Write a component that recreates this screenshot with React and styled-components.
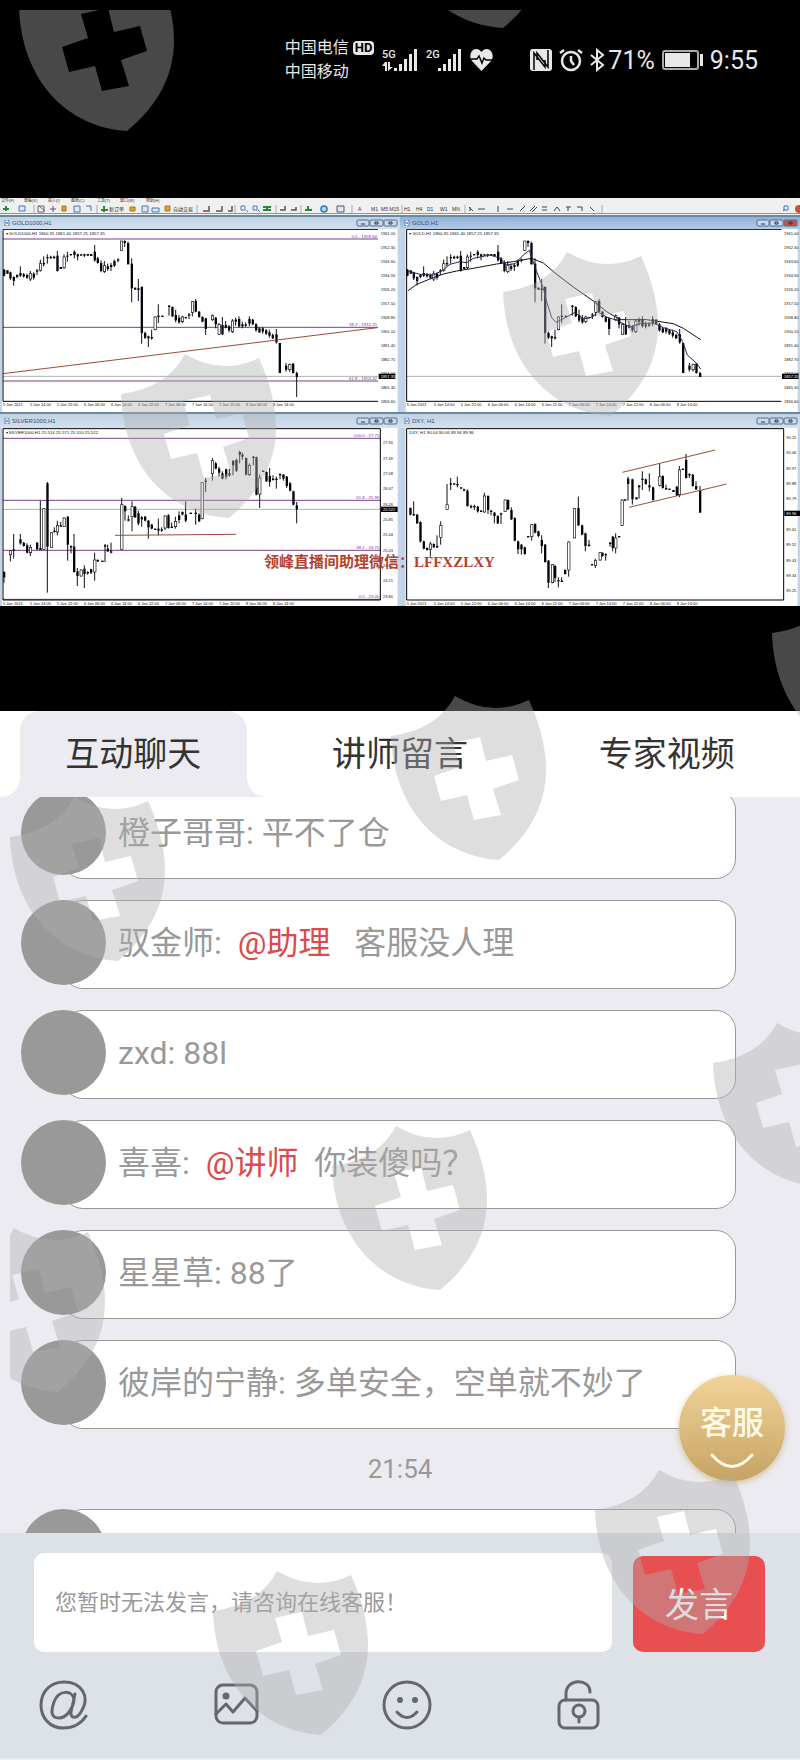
import React, { Component } from 'react';
import styled, { createGlobalStyle } from 'styled-components';

// Each bar: [x, high, low, bodyTop, bodyBottom, isHollow]
const GOLD_BARS = [
  [12, 222, 244, 224, 242], [22, 226, 236], [31, 230, 255, 232, 250], [41, 244, 272, 246, 258],
  [51, 238, 250, 240, 246], [61, 214, 246, 234, 242], [71, 234, 248, 238, 244], [81, 236, 252, 240, 248],
  [91, 228, 258, 236, 252, 1], [101, 232, 254, 236, 248], [111, 222, 240, 226, 230], [121, 194, 230, 206, 226, 1],
  [131, 184, 214, 204, 208], [142, 178, 206, 186, 190], [152, 182, 192, 185, 190], [162, 182, 192, 185, 189],
  [172, 168, 230, 182, 228], [182, 216, 222], [192, 178, 222, 186, 218, 1], [202, 170, 200, 182, 185],
  [212, 177, 181], [223, 166, 190, 170, 180], [233, 176, 196, 178, 184], [243, 178, 182], [253, 176, 186, 178, 182],
  [263, 177, 182], [273, 177, 183], [284, 150, 200, 170, 196], [293, 186, 206, 190, 204], [303, 196, 232, 204, 228],
  [313, 198, 234, 212, 230, 1], [323, 206, 228, 214, 222], [333, 204, 228, 210, 216], [343, 194, 216, 198, 212],
  [354, 190, 202, 193, 197], [364, 138, 168, 138, 166, 1], [374, 136, 156, 138, 144], [384, 140, 208, 144, 208],
  [395, 190, 322, 206, 280], [405, 278, 284], [415, 252, 318, 280, 285], [425, 274, 446, 276, 414],
  [435, 410, 432, 414, 428], [445, 422, 456, 424, 430], [455, 404, 434, 426, 430], [465, 364, 406, 366, 404, 1],
  [475, 328, 384, 362, 366], [487, 362, 366], [507, 330, 362, 332, 336], [517, 334, 366, 336, 364],
  [527, 344, 382, 360, 376], [537, 360, 386, 368, 382], [547, 362, 384, 366, 380, 1], [557, 366, 370],
  [567, 354, 372, 358, 362], [577, 318, 364, 320, 352, 1], [587, 312, 352, 318, 350], [597, 348, 368, 350, 366],
  [607, 364, 382, 366, 380], [617, 368, 420, 370, 402], [637, 358, 378, 362, 374, 1], [647, 366, 400, 368, 388],
  [657, 384, 420, 388, 418, 1], [667, 366, 420, 390, 418], [677, 378, 400, 390, 398], [687, 390, 412, 394, 406],
  [697, 372, 414, 378, 410, 1], [707, 368, 392, 374, 380], [717, 364, 398, 372, 394], [727, 380, 400, 388, 394],
  [737, 382, 396, 388, 392], [748, 364, 394, 372, 386], [758, 372, 390, 374, 388], [768, 384, 410, 388, 406],
  [778, 396, 414, 400, 412], [788, 396, 416, 400, 410], [798, 402, 420, 406, 416], [808, 404, 428, 412, 422],
  [818, 416, 432, 420, 430], [829, 402, 446, 418, 442], [839, 444, 534, 444, 534], [858, 504, 530, 512, 524],
  [869, 506, 530, 508, 524, 1], [879, 504, 536, 506, 534], [890, 530, 606, 534, 546],
];

const SILVER_BARS = [
  [12, 484, 518, 486, 502], [31, 420, 454, 422, 434, 1], [41, 372, 446, 418, 422], [61, 372, 404, 388, 400],
  [71, 396, 410, 398, 408], [81, 400, 430, 406, 428], [91, 404, 438, 412, 428, 1], [111, 396, 420, 398, 418],
  [121, 272, 420, 414, 420], [131, 294, 420, 296, 418, 1], [142, 216, 548, 220, 410], [154, 366, 412, 368, 412, 1],
  [163, 352, 368, 362, 366], [172, 332, 376, 346, 366, 1], [182, 336, 350, 346, 350], [192, 322, 350, 324, 350, 1],
  [203, 318, 452, 320, 404], [213, 406, 430, 408, 412], [222, 372, 488, 410, 486], [232, 474, 528, 484, 498],
  [243, 478, 500, 480, 498, 1], [253, 466, 534, 476, 492], [263, 484, 494, 486, 490], [273, 476, 492, 478, 488],
  [284, 428, 512, 450, 486, 1], [293, 448, 456, 450, 454], [307, 452, 456], [315, 402, 456, 406, 410],
  [323, 404, 426, 416, 424], [333, 398, 430, 424, 428], [365, 264, 420, 284, 418, 1], [375, 286, 332, 288, 304],
  [385, 316, 334, 328, 332], [396, 274, 364, 290, 320, 1], [405, 288, 324, 290, 322], [415, 302, 346, 310, 340],
  [425, 318, 350, 322, 328], [435, 318, 334, 320, 332], [445, 330, 386, 332, 352], [455, 342, 358, 344, 356],
  [465, 356, 360], [475, 326, 376, 356, 362], [485, 352, 366, 358, 362], [495, 316, 360, 318, 354, 1],
  [505, 312, 356, 316, 354], [515, 338, 354, 350, 354], [526, 320, 356, 334, 350, 1], [537, 304, 340, 316, 330],
  [547, 304, 316, 306, 314], [557, 274, 336, 314, 332], [572, 308, 312], [587, 296, 344, 308, 312],
  [597, 310, 336, 314, 334], [606, 216, 328, 218, 326, 1], [617, 204, 246, 212, 216], [637, 144, 212, 152, 190, 1],
  [647, 156, 178, 160, 176], [657, 170, 200, 176, 188], [667, 184, 208, 190, 206], [678, 176, 208, 178, 200],
  [688, 176, 200, 190, 196], [699, 152, 196, 152, 166], [709, 146, 186, 150, 182], [719, 122, 160, 126, 134],
  [727, 128, 150, 134, 140], [738, 142, 196, 144, 194], [748, 160, 198, 166, 194, 1], [760, 138, 166, 140, 144],
  [769, 140, 256, 142, 254], [779, 194, 294, 204, 252, 1], [789, 182, 186], [799, 184, 216, 186, 214],
  [809, 174, 230, 198, 216], [819, 196, 212, 206, 210], [829, 200, 236, 206, 210], [840, 190, 208, 192, 196],
  [850, 192, 212, 194, 206], [860, 198, 234, 200, 228], [870, 216, 244, 220, 242], [880, 242, 286, 244, 284],
  [890, 276, 340, 286, 298],
];

const DOLLAR_BARS = [
  [31, 292, 316, 294, 314], [41, 274, 318, 312, 316], [51, 312, 342, 314, 340], [61, 334, 398, 336, 394],
  [71, 392, 418, 394, 416], [81, 412, 422, 414, 420], [91, 396, 440, 402, 418, 1], [101, 400, 414, 402, 412],
  [111, 376, 414, 408, 412], [122, 334, 404, 346, 382, 1], [141, 222, 298, 284, 298, 1], [152, 204, 240, 220, 224],
  [162, 220, 224], [172, 200, 232, 222, 226], [183, 232, 236], [192, 236, 244, 238, 242], [202, 238, 290, 242, 288],
  [213, 284, 296, 288, 292], [223, 284, 300, 288, 292], [233, 288, 308, 290, 304], [243, 300, 306, 302, 306],
  [253, 248, 308, 258, 306, 1], [264, 256, 312, 258, 300], [273, 300, 316, 302, 306], [283, 306, 340, 308, 318],
  [293, 316, 342, 318, 340], [303, 308, 342, 310, 314], [315, 268, 306, 270, 304, 1], [324, 268, 300, 270, 298],
  [334, 292, 330, 300, 328], [344, 322, 394, 324, 392], [354, 392, 432, 394, 418], [364, 402, 434, 404, 418],
  [374, 410, 434, 412, 432], [384, 378, 382], [395, 342, 392, 344, 380, 1], [405, 340, 370, 342, 368],
  [415, 362, 382, 364, 378], [425, 376, 430, 390, 408], [435, 402, 458, 404, 456], [445, 450, 534, 452, 518],
  [457, 462, 520, 464, 518, 1], [465, 464, 516, 468, 504], [475, 502, 532, 510, 514], [485, 502, 516, 512, 516],
  [495, 478, 494, 480, 492], [506, 394, 500, 396, 480, 1], [523, 294, 384, 296, 384, 1], [535, 260, 348, 294, 346],
  [546, 344, 376, 346, 374], [556, 368, 424, 370, 408], [567, 390, 410, 404, 408], [576, 462, 466],
  [586, 446, 474, 452, 466, 1], [600, 426, 452, 428, 450, 1], [607, 428, 440, 428, 438], [617, 430, 452, 432, 436],
  [630, 396, 410, 398, 402], [638, 378, 424, 380, 414], [647, 370, 430, 384, 414, 1], [657, 378, 382],
  [666, 268, 348, 270, 346, 1], [675, 268, 272], [684, 200, 272, 206, 222], [697, 206, 284, 208, 268],
  [709, 262, 268], [717, 226, 266, 226, 232], [727, 184, 240, 206, 210], [737, 206, 224, 208, 222],
  [748, 190, 244, 226, 232], [759, 230, 272, 232, 270], [779, 160, 230, 200, 226, 1], [788, 196, 236, 198, 234],
  [798, 224, 240, 234, 238], [808, 236, 240], [820, 240, 246], [830, 228, 258, 230, 256], [838, 168, 262, 180, 254, 1],
  [848, 176, 180], [858, 132, 206, 150, 204], [868, 190, 204, 192, 196], [878, 192, 230, 194, 228],
  [888, 214, 240, 228, 238], [900, 228, 308, 240, 308],
];

const GOLD_SPOT_BARS = GOLD_BARS.slice(0, -1)
  .map(([x, high, low, top, bottom, hollow]) => [x + 10, high, low, top, bottom, hollow])
  .concat([[900, 530, 546, 534, 546]]);

const SLOW_AVERAGE = '24,287 50,268 100,248 130,237 170,228 220,220 290,207 340,200 395,190 430,204 470,238 520,276 580,318 620,350 660,374 740,374 780,380 820,386 850,400 902,434';
const FAST_AVERAGE = '24,228 60,238 100,240 125,228 150,208 180,200 200,203 220,190 270,180 300,190 320,210 345,206 370,180 388,166 396,190 410,230 430,280 440,320 455,368 468,382 500,366 525,352 550,372 580,365 592,350 620,366 650,376 690,396 720,386 760,384 790,398 830,410 848,440 862,480 890,505 902,522';

const CHARTS = [
  {
    title: 'GOLD1000,H1',
    quote: '▾ GOLD1000,H1  1860.35 1861.40 1857.25 1857.35',
    bars: GOLD_BARS,
    viewTop: 102,
    viewHeight: 549,
    left: 9,
    right: 1134,
    bottom: 619,
    levels: [[132, '0.0 - 1959.64'], [397, '38.2 - 1912.25'], [558, '61.8 - 1853.42']],
    last: 544,
    lastText: '1857.35',
    firstPrice: 1961,
    priceStep: 8.7,
    priceTop: 115,
    priceGap: 42,
    trends: [[9, 536, 1132, 398]],
  },
  {
    title: 'GOLD,H1',
    quote: '▾ GOLD,H1  1860.35 1861.40 1857.25 1857.35',
    bars: GOLD_SPOT_BARS,
    averages: true,
    active: true,
    viewTop: 102,
    viewHeight: 549,
    left: 20,
    right: 1144,
    bottom: 619,
    levels: [],
    last: 544,
    lastText: '1857.35',
    firstPrice: 1961,
    priceStep: 8.7,
    priceTop: 115,
    priceGap: 42,
    trends: [],
  },
  {
    title: 'SILVER1000,H1',
    quote: '▾ SILVER1000,H1  25.514 25.571 25.510 25.522',
    bars: SILVER_BARS,
    framed: true,
    viewTop: 54,
    viewHeight: 534,
    left: 9,
    right: 1141,
    bottom: 570,
    levels: [[85, '100.0 - 27.75'], [271, '61.8 - 25.96'], [421, '38.2 - 24.70'], [568, '0.0 - 23.40']],
    last: 298,
    lastText: '25.522',
    firstPrice: 27.9,
    priceStep: 0.41,
    priceTop: 98,
    priceGap: 46,
    trends: [[345, 376, 708, 373]],
  },
  {
    title: 'DXY, H1',
    quote: 'DXY, H1  90.04 90.06 89.94 89.96',
    bars: DOLLAR_BARS,
    framed: true,
    viewTop: 54,
    viewHeight: 534,
    left: 20,
    right: 1151,
    bottom: 570,
    levels: [],
    last: null,
    lastY: 310,
    lastText: '89.96',
    firstPrice: 90.15,
    priceStep: 0.09,
    priceTop: 82,
    priceGap: 46,
    trends: [[667, 187, 946, 120], [687, 292, 980, 222]],
  },
];

const TIMES = ['5 Jan 2021', '5 Jan 14:00', '5 Jan 22:00', '6 Jan 06:00', '6 Jan 14:00', '6 Jan 22:00', '7 Jan 06:00', '7 Jan 14:00', '7 Jan 22:00', '8 Jan 06:00', '8 Jan 14:00'];

const MESSAGES = [
  { id: 1, name: '橙子哥哥', text: ' 平不了仓' },
  { id: 2, name: '驭金师', mention: '@助理', text: '   客服没人理' },
  { id: 3, name: 'zxd', text: ' 88l' },
  { id: 4, name: '喜喜', mention: '@讲师', text: '  你装傻吗？' },
  { id: 5, name: '星星草', text: ' 88了' },
  { id: 6, name: '彼岸的宁静', text: ' 多单安全，空单就不妙了' },
];

const TABS = ['互动聊天', '讲师留言', '专家视频'];

const SHIELDS = [
  [19, -33], [395, -136], [503, 252], [121, 354], [772, 593], [391, 696],
  [10, 797], [713, 1023], [332, 1126], [-50, 1228], [595, 1470], [213, 1571],
];

const SHIELD_PATH = 'M64 0Q101 22 138 4C170 75 155 125 108 164C45 160 2 110 0 40Q46 34 64 0Z'
  + 'M62 47L69 71L43 80L50 105L76 99L83 124L110 119L102 93L128 84L121 59L95 65L89 41Z';

function Bars ({ bars }) {
  return bars.map(([x, high, low, top = high, bottom = low, hollow]) => (
    <g key={x}>
      <path d={`M${x} ${high}V${low}`} stroke="#111" strokeWidth="3" />
      <rect
        x={x - 3}
        y={top}
        width="7"
        height={Math.max(bottom - top, 3)}
        fill={hollow ? '#fff' : '#050510'}
        stroke={hollow ? '#111' : 'none'}
        strokeWidth="2"
      />
    </g>
  ));
}

function ChartPanel ({ chart }) {
  const {
    averages, active, bars, bottom, framed, last, lastText, lastY, left, levels, quote, right, title,
    firstPrice, priceStep, priceTop, priceGap, trends, viewHeight, viewTop,
  } = chart;
  const lastLine = last || lastY;
  const priceCount = Math.floor((bottom - priceTop) / priceGap) + 1;
  return (
    <ChartWindow>
      <ChartTitle $active={active} $tall={framed}>
        <ChartGlyph viewBox="0 0 6 6"><path d="M1 0H4L5 1V6H1ZM2 4L3 2L4 4" fill="#fff" stroke="#5580b0" /></ChartGlyph>
        <span>{title}</span>
        <WindowButtons viewBox="0 0 42 8">
          <rect x="1" y="1" width="12" height="6" rx="1" fill="#c9d9ee" stroke="#566d8c" />
          <rect x="14" y="1" width="13" height="6" rx="1" fill="#c9d9ee" stroke="#566d8c" />
          <rect x="28" y="1" width="13" height="6" rx="1" fill={active ? '#c8543f' : '#c9d9ee'} stroke="#566d8c" />
          <path d="M5 5H9M19 3H22V5H19ZM33 3H36V5H33Z" fill="none" stroke="#334" />
        </WindowButtons>
      </ChartTitle>
      <ChartDrawing viewBox={`0 ${viewTop} 1200 ${viewHeight}`}>
        <rect x={left - 3} y={viewTop} width={1196 - left} height={viewHeight} fill="#fff" />
        <text x={left + 8} y={framed ? 72 : 120} fontSize="13" fill="#111">{quote}</text>
        {levels.map(([y, label]) => (
          <g key={y}>
            <path d={`M${left} ${y}H${right}`} stroke="#7a3f8c" strokeWidth="3" />
            <text x={right - 3} y={y - 3} fontSize="13" fill="#7a2f9c" textAnchor="end">{label}</text>
          </g>
        ))}
        {last && <path d={`M${left} ${last}H${right}`} stroke="#aab0b0" strokeWidth="3" />}
        <Bars bars={bars} />
        {averages && (
          <g fill="none" strokeWidth="3">
            <polyline points={SLOW_AVERAGE} stroke="#111" />
            <polyline points={FAST_AVERAGE} stroke="#25265a" />
          </g>
        )}
        {trends.map(([x1, y1, x2, y2]) => (
          <path key={y1} d={`M${x1} ${y1}L${x2} ${y2}`} stroke="#a04a38" strokeWidth="3" />
        ))}
        <path
          d={framed
            ? `M${left} 56H${right}V${bottom}H${left}Z`
            : `M${right} 103H${left}V${bottom}H${right}`}
          fill="none"
          stroke="#000"
          strokeWidth="3"
        />
        {Array.from({ length: priceCount }, (_, index) => (
          <text key={index} x={right + 8} y={priceTop + 5 + (index * priceGap)} fontSize="12" fill="#111">
            {(firstPrice - (index * priceStep)).toFixed(2)}
          </text>
        ))}
        <rect x={right + 2} y={lastLine - 8} width="50" height="16" fill="#000" />
        <text x={right + 8} y={lastLine + 5} fontSize="12" fill="#fff">{lastText}</text>
        {TIMES.map((time, index) => (
          <text key={time} x={left + (index * 81)} y={bottom + 15} fontSize="12" fill="#111">{time}</text>
        ))}
      </ChartDrawing>
    </ChartWindow>
  );
}

function SignalIcon ({ label, withArrows }) {
  return (
    <StatusIcon $width={35} viewBox="0 0 35 24">
      <text x="0" y="10" fontSize="11" fontWeight="500">{label}</text>
      <path d="M12 20h3v3h-3zM17 16h3v7h-3zM22 11h3v12h-3zM27 6h3v17h-3zM32 1h3v22h-3z" />
      {withArrows && <path d="M0 18L3 14H5V23H3V18ZM6 14H8V19H11L6 23Z" />}
    </StatusIcon>
  );
}

function StatusBar () {
  return (
    <StatusBarWrapper>
      <Carriers>
        <CarrierLine>
          中国电信
          <HdBadge>HD</HdBadge>
        </CarrierLine>
        <CarrierLine>中国移动</CarrierLine>
      </Carriers>
      <StatusGroup>
        <SignalIcon label="5G" withArrows />
        <SignalIcon label="2G" />
        <StatusIcon $width={23} viewBox="0 0 23 24">
          <path d="M11.500 23L2 13C-2 7 2 1 6 1C9 1 10.500 2.500 11.500 4C12.500 2.500 14 1 17 1C21 1 25 7 21 13Z" />
          <path d="M1 11H7L9 8L12 15L14 10L16 12H22" fill="none" stroke="#000" strokeWidth="1.500" />
        </StatusIcon>
      </StatusGroup>
      <StatusGroup $last>
        <StatusIcon $width={22} viewBox="0 0 22 24">
          <path d="M3 1H19Q22 1 22 4V20Q22 23 19 23H3Q0 23 0 20V4Q0 1 3 1Z" />
          <path d="M4 22V5L15 19V12M18 2V19L7 5V12" fill="none" stroke="#000" strokeWidth="1.500" />
        </StatusIcon>
        <StatusIcon $width={24} viewBox="0 0 24 24">
          <path d="M12 4A9 9 0 1 0 12 22A9 9 0 1 0 12 4M12 8V13L15 17M1 5L5 2M23 5L19 2" fill="none" stroke="#e8e8e8" strokeWidth="2.500" />
        </StatusIcon>
        <BatteryGroup>
          <StatusIcon $width={15} viewBox="0 0 15 24">
            <path d="M1 7L13 17L7 22V2L13 7L1 17" fill="none" stroke="#e8e8e8" strokeWidth="2" />
          </StatusIcon>
          71%
        </BatteryGroup>
        <StatusIcon $width={41} viewBox="0 0 41 24">
          <rect x="1" y="3" width="35" height="18" rx="2" fill="none" stroke="#aaa" strokeWidth="2" />
          <path d="M3 5H28V19H3ZM38 6H41V18H38Z" />
        </StatusIcon>
        <span>9:55</span>
      </StatusGroup>
    </StatusBarWrapper>
  );
}

function TradingToolbar () {
  return (
    <ToolbarDrawing viewBox="0 0 800 17">
      <rect width="800" height="17" fill="#f1f0f0" />
      <text x="1" y="4" fontSize="4" fill="#333">文件(F)</text>
      <text x="24" y="4" fontSize="4" fill="#333">查看(V)</text>
      <text x="48" y="4" fontSize="4" fill="#333">插入(I)</text>
      <text x="71" y="4" fontSize="4" fill="#333">图表(C)</text>
      <text x="97" y="4" fontSize="4" fill="#333">工具(T)</text>
      <text x="120" y="4" fontSize="4" fill="#333">窗口(W)</text>
      <text x="146" y="4" fontSize="4" fill="#333">帮助(H)</text>
      <path d="M0 15.500H800" stroke="#8795a8" />
      <path d="M6 8V13M3 11H9M104 8V14M101 12H108M308 8V13M305 12H312M267 8V13M263 9H271M263 12H271" stroke="#238a3c" strokeWidth="2" />
      <path d="M19 8H25V13H19ZM74 8H80V14H74ZM86 8H91V13M142 8H148V14H142ZM152 10H159V14H152Z" fill="#dce8f8" stroke="#4a78b0" />
      <path d="M62 8H66V13H62ZM130 9H135V13H130ZM165 8H170V13H165Z" fill="#d8a23c" stroke="#a87420" />
      <path d="M53 8V14M50 11H56" stroke="#6a4a98" />
      <path d="M38 8H44V14H38ZM39 8L45 13" fill="none" stroke="#667" />
      <path d="M203 13H209V8M216 13H222V8M228 13H232V8M280 12H285V8M291 12H296V9" fill="none" stroke="#555" strokeWidth="1.500" />
      <path d="M241 8H245V12H241ZM246 12L248 14M253 8H257V12H253ZM258 12L260 14" fill="none" stroke="#3c80c0" />
      <circle cx="324" cy="11" r="3" fill="#b8d8f0" stroke="#3874a8" strokeWidth="1.500" />
      <path d="M337 8H344V14H337Z" fill="#dce8f8" stroke="#4a5878" />
      <path d="M34 7V15M97 7V15M197 7V15M235 7V15M276 7V15M301 7V15M352 7V15M402 7V15M465 7V15M602 7V15" stroke="#aaa" />
      <text x="109" y="13" fontSize="5" fill="#222">新订单</text>
      <text x="173" y="13" fontSize="5" fill="#222">自动交易</text>
      <text x="358" y="13" fontSize="5" fill="#333">A</text>
      <text x="371" y="13" fontSize="5" fill="#333">M1</text>
      <text x="381" y="13" fontSize="5" fill="#333">M5 M15</text>
      <text x="404" y="13" fontSize="5" fill="#333">H1</text>
      <text x="416" y="13" fontSize="5" fill="#333">H4</text>
      <text x="427" y="13" fontSize="5" fill="#333">D1</text>
      <text x="440" y="13" fontSize="5" fill="#333">W1</text>
      <text x="452" y="13" fontSize="5" fill="#333">MN</text>
      <path d="M469 9L473 13M470 13V9M478 11H485M498 8V14M507 11H513M520 13L525 8M530 13L535 8M532 14L537 9M542 9H547M542 12H547M554 13L557 9L560 13M566 9H571M568 9V13M577 9H582V13M590 9L594 13" fill="none" stroke="#444" />
      <path d="M784 8H788V12H784ZM783 13L785 11" fill="none" stroke="#3874c8" />
      <circle cx="799" cy="11" r="4" fill="#c8543f" />
    </ToolbarDrawing>
  );
}

class ChatTabs extends Component {
  constructor (props) {
    super(props);
    this.state = {
      selectedTab: TABS[0],
    };
  }

  selectTab (tab) {
    this.setState({ selectedTab: tab });
  }

  render () {
    const { selectedTab } = this.state;
    return (
      <TabsWrapper role="tablist">
        {TABS.map((tab) => (
          <TabButton
            key={tab}
            type="button"
            role="tab"
            aria-selected={tab === selectedTab}
            $selected={tab === selectedTab}
            onClick={() => this.selectTab(tab)}
          >
            {tab}
          </TabButton>
        ))}
      </TabsWrapper>
    );
  }
}

function ChatMessage ({ message }) {
  const { mention, name, text } = message;
  return (
    <MessageRow>
      <Avatar />
      <Bubble>
        {name && `${name}:`}
        {mention && (
          <Mention>{`  ${mention}`}</Mention>
        )}
        {text}
      </Bubble>
    </MessageRow>
  );
}

function Composer () {
  return (
    <ComposerWrapper>
      <InputRow>
        <MessageInput type="text" aria-label="发言内容" placeholder="您暂时无法发言，请咨询在线客服！" />
        <SendButton type="button">发言</SendButton>
      </InputRow>
      <ToolRow>
        <ToolButton type="button" aria-label="提及">
          <ToolIcon viewBox="0 0 50 50">
            <path d="M36 14L32 32C31 39 38 39 42 32C52 16 42 2 25 2C12 2 2 11 2 25C2 38 11 48 24 48C35 48 42 44 47 36M35 20C34 10 20 9 15 22C11 33 13 38 20 38C28 38 34 28 35 20" />
          </ToolIcon>
        </ToolButton>
        <ToolButton type="button" aria-label="图片">
          <ToolIcon viewBox="0 0 50 50">
            <rect x="5" y="5" width="41" height="38" rx="7" />
            <circle cx="15" cy="16" r="2" fill="#64686c" />
            <path d="M5 34L15 24L22 32L34 18L46 31" />
          </ToolIcon>
        </ToolButton>
        <ToolButton type="button" aria-label="表情">
          <ToolIcon viewBox="0 0 50 50">
            <circle cx="25" cy="25" r="23" />
            <path d="M15 32Q25 43 35 32" />
            <circle cx="18" cy="20" r="1.500" fill="#64686c" />
            <circle cx="33" cy="20" r="1.500" fill="#64686c" />
          </ToolIcon>
        </ToolButton>
        <ToolButton type="button" aria-label="解锁">
          <ToolIcon viewBox="0 0 50 50">
            <rect x="5" y="20" width="39" height="28" rx="6" />
            <path d="M12 20V14C12 -2 36 -2 36 12M25 37V42" />
            <circle cx="25" cy="31" r="6" />
          </ToolIcon>
        </ToolButton>
      </ToolRow>
    </ComposerWrapper>
  );
}

export default function App () {
  return (
    <Page>
      <GlobalStyle />
      <StatusBar />
      <VideoPanel>
        <TradingToolbar />
        <ChartGrid>
          {CHARTS.map((chart) => (
            <ChartPanel key={chart.title} chart={chart} />
          ))}
        </ChartGrid>
        <VideoCaption>领峰直播间助理微信：LFFXZLXY</VideoCaption>
      </VideoPanel>
      <VideoFooter />
      <ChatTabs />
      <ChatPanel>
        <MessageList>
          {MESSAGES.map((message) => (
            <ChatMessage key={message.id} message={message} />
          ))}
          <TimeDivider>21:54</TimeDivider>
          <ChatMessage message={{}} />
        </MessageList>
        <ServiceButton type="button">
          客服
          <ServiceSmile viewBox="0 0 44 16">
            <path d="M2 2Q22 25 42 2" />
          </ServiceSmile>
        </ServiceButton>
      </ChatPanel>
      <Composer />
      <ShieldLayer aria-hidden="true">
        <ShieldDrawing>
          {SHIELDS.map(([x, y]) => (
            <path key={y} transform={`translate(${x - 10} ${y - 10})`} fillRule="evenodd" d={SHIELD_PATH} />
          ))}
        </ShieldDrawing>
      </ShieldLayer>
    </Page>
  );
}

const GlobalStyle = createGlobalStyle`
  * {
    box-sizing: border-box;
  }
  body {
    background: #dde1e8;
    font-family: Roboto, 'Noto Sans CJK SC', sans-serif;
    margin: 0;
  }
  button,
  input {
    border: 0;
    font-family: inherit;
    padding: 0;
  }
`;

const Avatar = styled.div`
  background: #999;
  border-radius: 50%;
  flex: none;
  height: 85px;
  margin-right: -43px;
  width: 85px;
  z-index: 1;
`;

const BatteryGroup = styled.div`
  align-items: center;
  display: flex;
  gap: 3px;
`;

const Bubble = styled.div`
  background: #fff;
  border: 1px solid #999;
  border-radius: 20px;
  color: #999;
  flex: 1;
  font-size: 32px;
  line-height: 48px;
  min-height: 89px;
  padding: 18px 20px 21px 54px;
  white-space: pre-wrap;
`;

const CarrierLine = styled.div`
  align-items: center;
  display: flex;
  font-size: 16px;
  gap: 4px;
  line-height: 24px;
`;

const Carriers = styled.div`
  margin-right: 8px;
`;

const ChartDrawing = styled.svg`
  display: block;
  font-family: 'Liberation Sans', sans-serif;
  width: 100%;
`;

const ChartGlyph = styled.svg`
  height: 6px;
  width: 6px;
`;

const ChartGrid = styled.div`
  display: grid;
  grid-template-columns: 1fr 1fr;
`;

const ChartTitle = styled.div`
  align-items: center;
  background: ${({ $active }) => ($active ? 'linear-gradient(#8fb0d8, #b4cae8)' : 'linear-gradient(#c0d2e6, #d4e0ef)')};
  border-top: 2px solid #6b8a9c;
  color: #34506e;
  display: flex;
  font-family: 'Liberation Sans', sans-serif;
  font-size: 6px;
  gap: 2px;
  height: ${({ $tall }) => ($tall ? '16px' : '14px')};
  padding: 0 2px 0 4px;
`;

const ChartWindow = styled.div`
  background: #c4d4e8;
`;

const ChatPanel = styled.div`
  background: #ecebf1;
  height: 736px;
  overflow: hidden;
  position: relative;
`;

const ComposerWrapper = styled.div`
  background: #dde1e8;
  border-bottom: 2px solid #e9edf5;
  padding: 20px 0 28px;
`;

const HdBadge = styled.span`
  background: #e8e8e8;
  border-radius: 4px;
  color: #000;
  font-size: 13px;
  font-weight: 700;
  line-height: 14px;
  padding: 0 2px;
`;

const InputRow = styled.div`
  align-items: flex-end;
  display: flex;
  gap: 21px;
  padding: 0 35px 0 34px;
`;

const Mention = styled.span`
  color: #dc4a4a;
`;

const MessageInput = styled.input`
  background: #fff;
  border-radius: 10px;
  color: #333;
  flex: 1;
  font-size: 22px;
  height: 99px;
  min-width: 0;
  padding: 0 21px;
  &::placeholder {
    color: #999;
    opacity: 1;
  }
`;

const MessageList = styled.div`
  display: flex;
  flex-direction: column;
  gap: 21px;
  margin-top: -7px;
  padding: 0 64px 0 21px;
`;

const MessageRow = styled.div`
  align-items: flex-start;
  display: flex;
`;

const Page = styled.div`
  overflow: hidden;
  position: relative;
`;

const SendButton = styled.button`
  background: #e84f50;
  border-radius: 10px;
  color: #fff;
  font-size: 34px;
  height: 96px;
  padding-bottom: 4px;
  width: 132px;
`;

const ServiceButton = styled.button`
  align-items: center;
  background: linear-gradient(#f1d49b, #c6a362);
  border-radius: 50%;
  bottom: 52px;
  box-shadow: 0 2px 6px rgba(200, 160, 90, .6);
  color: #fffbe6;
  display: flex;
  flex-direction: column;
  font-size: 32px;
  font-weight: 500;
  height: 106px;
  line-height: 48px;
  padding-top: 24px;
  position: absolute;
  right: 15px;
  width: 106px;
  z-index: 2;
`;

const ServiceSmile = styled.svg`
  fill: none;
  height: 16px;
  margin-top: 6px;
  stroke: #fffbe6;
  stroke-linecap: round;
  stroke-width: 3px;
  width: 44px;
`;

const ShieldDrawing = styled.svg`
  display: block;
  fill: rgba(176, 176, 176, .41);
  height: 100%;
  width: 100%;
`;

const ShieldLayer = styled.div`
  inset: 10px 0 0 10px;
  overflow: hidden;
  pointer-events: none;
  position: absolute;
  z-index: 3;
`;

const StatusBarWrapper = styled.div`
  background: #000;
  color: #e8e8e8;
  display: flex;
  height: 198px;
  justify-content: flex-end;
  padding: 36px 42px 0 0;
`;

const StatusGroup = styled.div`
  align-items: center;
  display: flex;
  font-size: 25px;
  gap: ${({ $last }) => ($last ? '7px' : '9px')};
  height: 48px;
  margin-right: ${({ $last }) => ($last ? '0' : '37px')};
`;

const StatusIcon = styled.svg`
  fill: #e8e8e8;
  flex: none;
  height: 24px;
  width: ${({ $width }) => `${$width}px`};
`;

const TabButton = styled.button`
  background: ${({ $selected }) => ($selected ? '#ecebf1' : 'transparent')};
  border-radius: 20px 20px 0 0;
  color: #333;
  font-size: 34px;
  line-height: 48px;
  margin: 0 20px;
  position: relative;
  &::before,
  &::after {
    bottom: 0;
    content: ${({ $selected }) => ($selected ? "''" : 'none')};
    height: 18px;
    position: absolute;
    width: 18px;
  }
  &::before {
    background: radial-gradient(circle at 0 0, transparent 17px, #ecebf1 18px);
    right: 100%;
  }
  &::after {
    background: radial-gradient(circle at 100% 0, transparent 17px, #ecebf1 18px);
    left: 100%;
  }
`;

const TabsWrapper = styled.div`
  background: #fff;
  display: grid;
  grid-template-columns: repeat(3, 1fr);
  height: 86px;
`;

const TimeDivider = styled.div`
  color: #999;
  font-size: 26px;
  line-height: 38px;
  padding-left: 43px;
  text-align: center;
`;

const ToolButton = styled.button`
  background: transparent;
  height: 50px;
  width: 50px;
`;

const ToolIcon = styled.svg`
  display: block;
  fill: none;
  height: 50px;
  stroke: #64686c;
  stroke-linecap: round;
  stroke-linejoin: round;
  stroke-width: 3px;
  width: 50px;
`;

const ToolRow = styled.div`
  display: grid;
  grid-template-columns: repeat(4, 1fr);
  margin-top: 28px;
  padding: 0 75px 0 39px;
`;

const ToolbarDrawing = styled.svg`
  display: block;
  font-family: 'Liberation Sans', 'Noto Sans CJK SC', sans-serif;
  width: 100%;
`;

const VideoCaption = styled.div`
  bottom: 36px;
  color: #b5402e;
  font-family: 'Liberation Serif', 'Noto Sans CJK SC', serif;
  font-size: 15px;
  font-weight: 700;
  left: 33%;
  line-height: 16px;
  position: absolute;
  white-space: nowrap;
`;

const VideoFooter = styled.div`
  background: #000;
  height: 105px;
`;

const VideoPanel = styled.div`
  position: relative;
`;

const WindowButtons = styled.svg`
  height: 8px;
  margin-left: auto;
  width: 42px;
`;
